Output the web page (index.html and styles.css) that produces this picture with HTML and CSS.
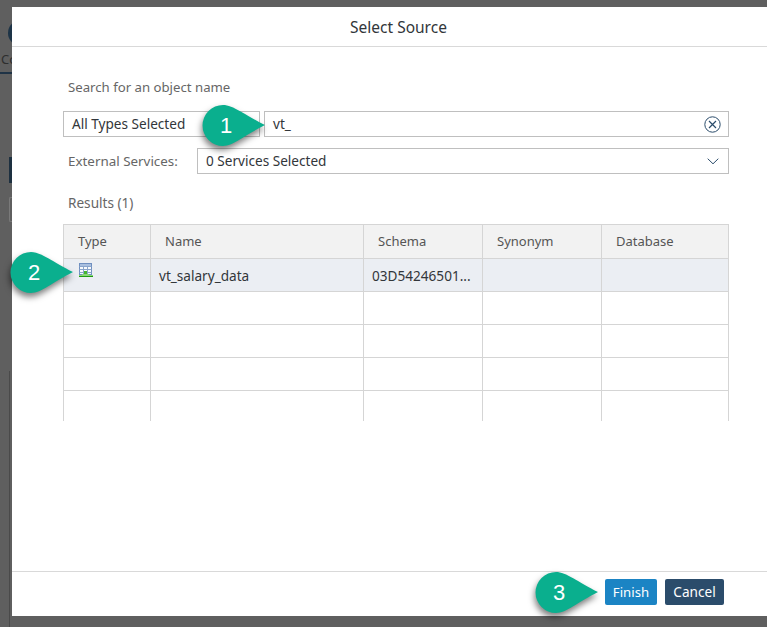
FILE: index.html
```html
<!DOCTYPE html>
<html>
<head>
	<meta charset="utf-8">
	<title>Select Source</title>
	<link rel="stylesheet" href="styles.css">
</head>
<body>

	<!-- what shows of the page behind the dialog -->
	<div class="behind">
		<span class="behind-avatar"></span>
		<span class="behind-tab">Co</span>
		<span class="behind-rule"></span>
		<span class="behind-bar"></span>
		<span class="behind-box"></span>
		<span class="behind-panel"></span>
	</div>

	<div class="dialog">
		<div class="dialog-header">Select Source</div>

		<div class="dialog-body">
			<div class="label search-label">Search for an object name</div>

			<div class="row">
				<div class="field field-types">All Types Selected</div>
				<div class="field field-search">
					<span>vt_</span>
					<svg class="icon" width="17" height="17" viewBox="0 0 17 17">
						<circle cx="8.500" cy="8.500" r="7.700" fill="none" stroke="#2b4c6b" stroke-width="1"/>
						<path d="M5 5l7 7M12 5l-7 7" fill="none" stroke="#2b4c6b" stroke-width="1.200"/>
					</svg>
				</div>
			</div>

			<div class="row row-services">
				<div class="label services-label">External Services:</div>
				<div class="field field-services">
					<span>0 Services Selected</span>
					<svg class="icon" width="12" height="7" viewBox="0 0 12 7">
						<path d="M.7.7L6 5.800 11.300.7" fill="none" stroke="#2b4c6b" stroke-width="1"/>
					</svg>
				</div>
			</div>

			<div class="label results-label">Results (1)</div>

			<div class="results">
				<table>
					<colgroup>
						<col class="c-type">
						<col class="c-name">
						<col class="c-schema">
						<col class="c-synonym">
						<col class="c-database">
					</colgroup>
					<thead>
						<tr>
							<th>Type</th>
							<th>Name</th>
							<th>Schema</th>
							<th>Synonym</th>
							<th>Database</th>
						</tr>
					</thead>
					<tbody>
						<tr class="selected">
							<td class="type-cell">
								<svg width="14" height="15" viewBox="0 0 14 15">
									<rect x=".5" y=".5" width="12" height="11" fill="#f8fafc" stroke="#6f8fc0"/>
									<path d="M.5 3.500h12M.5 6.500h12M.5 9.500h12M4.500 1v10M8.500 1v10" fill="none" stroke="#8aa5cc"/>
									<rect x="1" y="1" width="11" height="2" fill="#a9bfdf"/>
									<rect x="5" y="8" width="3" height="5" fill="#46b52f"/>
									<rect x="3" y="11" width="7" height="2" fill="#8ad676"/>
									<rect x="0" y="12" width="14" height="1" fill="#8ad676"/>
									<rect x="0" y="13" width="14" height="1" fill="#1f9a12"/>
								</svg>
							</td>
							<td>vt_salary_data</td>
							<td>03D54246501...</td>
							<td></td>
							<td></td>
						</tr>
						<tr><td></td><td></td><td></td><td></td><td></td></tr>
						<tr><td></td><td></td><td></td><td></td><td></td></tr>
						<tr><td></td><td></td><td></td><td></td><td></td></tr>
						<tr><td></td><td></td><td></td><td></td><td></td></tr>
					</tbody>
				</table>
			</div>
		</div>

		<div class="dialog-footer">
			<button class="btn btn-finish">Finish</button>
			<button class="btn btn-cancel">Cancel</button>
		</div>
	</div>

	<div class="callout callout-1">
		<svg width="64" height="42" viewBox="0 0 64 42"><path d="M22 0C32 0 44 10 64 20C44 30 32 41 22 41A20.500 20.500 0 0 1 22 0Z"/></svg>
		<span>1</span>
	</div>
	<div class="callout callout-2">
		<svg width="64" height="42" viewBox="0 0 64 42"><path d="M22 0C32 0 44 10 64 20C44 30 32 41 22 41A20.500 20.500 0 0 1 22 0Z"/></svg>
		<span>2</span>
	</div>
	<div class="callout callout-3">
		<svg width="64" height="42" viewBox="0 0 64 42"><path d="M22 0C32 0 44 10 64 20C44 30 32 41 22 41A20.500 20.500 0 0 1 22 0Z"/></svg>
		<span>3</span>
	</div>

</body>
</html>
```
FILE: styles.css
```css
html, body {
	height: 100%;
}

body {
	margin: 0;
	padding: 7px 0 11px 12px;
	box-sizing: border-box;
	background: #5f5f5f;
	font-family: "Noto Sans", "Open Sans", sans-serif;
	font-size: 13.6px;
	color: #32363a;
	overflow: hidden;
}

/* page behind the dialog */
.behind span {
	position: absolute;
	display: block;
}

.behind-avatar {
	left: 8px;
	top: 20px;
	width: 26px;
	height: 26px;
	border-radius: 50%;
	background: #1d3447;
}

.behind-tab {
	left: 1px;
	top: 50px;
	font-size: 13px;
	color: #2e2e2e;
}

.behind-rule {
	left: 0;
	top: 72px;
	width: 12px;
	height: 2px;
	background: #1f3346;
}

.behind-bar {
	left: 9px;
	top: 157px;
	width: 3px;
	height: 26px;
	background: #1d3040;
}

.behind-box {
	left: 9px;
	top: 197px;
	width: 3px;
	height: 25px;
	border: 1px solid #7a7a7a;
	border-right: 0;
	border-radius: 2px 0 0 2px;
	box-sizing: border-box;
}

.behind-panel {
	left: 9px;
	top: 371px;
	width: 3px;
	height: 256px;
	border-left: 1px solid #4a4a4a;
	box-sizing: border-box;
}

/* dialog */
.dialog {
	position: relative;
	height: 100%;
	display: flex;
	flex-direction: column;
	background: #fff;
}

.dialog-header {
	height: 39px;
	line-height: 41px;
	padding-left: 18px;
	text-align: center;
	font-size: 15.5px;
	color: #32363a;
	border-bottom: 1px solid #d9d9d9;
	flex: none;
}

.dialog-body {
	flex: 1;
	padding: 31px 38px 0 51px;
}

.label {
	color: #666;
	margin-left: 5px;
	line-height: 18px;
}

.search-label {
	height: 18px;
	margin-bottom: 15px;
	font-size: 13.2px;
}

.row {
	display: flex;
	gap: 4px;
}

.row-services {
	margin-top: 11px;
	align-items: center;
}

.field {
	display: flex;
	align-items: center;
	justify-content: space-between;
	box-sizing: border-box;
	height: 26px;
	padding: 0 8px;
	border: 1px solid #bfbfbf;
	background: #fff;
	color: #32363a;
}

.field span {
	margin-bottom: 1px;
}

.field-types {
	width: 197px;
	flex: none;
	padding-bottom: 1px;
}

.field-search {
	flex: 1;
	padding-right: 7px;
}

.services-label {
	width: 125px;
	flex: none;
	font-size: 13.4px;
}

.field-services {
	flex: 1;
	padding-right: 9px;
}

.icon {
	flex: none;
}

.results-label {
	margin-top: 20px;
	margin-bottom: 12px;
}

/* results table */
.results {
	height: 197px;
	overflow: hidden;
}

table {
	border-collapse: collapse;
	table-layout: fixed;
	width: 666px;
}

.c-type { width: 87px; }
.c-name { width: 213px; }
.c-schema { width: 119px; }
.c-synonym { width: 119px; }
.c-database { width: 127px; }

th, td {
	border: 1px solid #d5d5d5;
	padding: 0 8px;
	box-sizing: border-box;
	height: 33px;
	font-weight: normal;
	text-align: left;
	white-space: nowrap;
	overflow: hidden;
}

th {
	height: 34px;
	padding: 0 8px 2px 14px;
	background: #f2f2f2;
	color: #555;
	font-size: 13px;
}

.selected td {
	background: #ebeef3;
}

.selected .type-cell {
	padding: 0 0 0 15px;
	vertical-align: top;
	line-height: 0;
}

.type-cell svg {
	margin-top: 4px;
}

/* footer */
.dialog-footer {
	flex: none;
	box-sizing: border-box;
	height: 45px;
	display: flex;
	align-items: center;
	justify-content: flex-end;
	gap: 8px;
	padding: 0 43px 4px 0;
	border-top: 1px solid #d9d9d9;
}

.btn {
	height: 26px;
	padding: 0 0 1px;
	border: 1px solid transparent;
	border-radius: 2px;
	font-family: inherit;
	font-size: 13.6px;
	color: #fff;
}

.btn-finish {
	width: 52px;
	background: #1b84c4;
	font-size: 13.2px;
}

.btn-cancel {
	width: 59px;
	background: #2b4c6b;
}

/* numbered callouts */
.callout {
	position: absolute;
	width: 64px;
	height: 42px;
}

.callout svg {
	display: block;
	overflow: visible;
	filter: drop-shadow(-1px 4px 3px rgba(0, 0, 0, 0.5));
}

.callout path {
	fill: #0aaf8e;
}

.callout span {
	position: absolute;
	left: 5px;
	top: 0;
	width: 40px;
	line-height: 41px;
	text-align: center;
	font-family: "Liberation Sans", sans-serif;
	font-size: 22px;
	color: #fff;
}

.callout-1 { left: 201px; top: 105px; }
.callout-2 { left: 9px; top: 252px; }
.callout-3 { left: 534px; top: 572px; }
```
